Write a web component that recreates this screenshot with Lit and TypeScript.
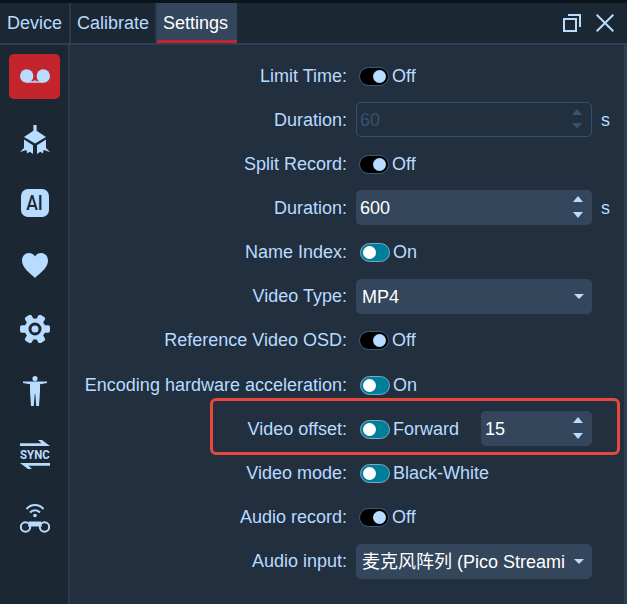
import { LitElement, html, css, svg } from "lit";
import { customElement } from "lit/decorators.js";

const icons = {
  record: svg`<svg width="30" height="15" viewBox="0 0 30 15"><circle cx="6.700" cy="7" r="6.700"/><circle cx="23.300" cy="7" r="6.700"/><path d="M6.700 12.200h16.600v1.500H6.700z"/><path d="M13.500 11.500h3v1h-3z"/></svg>`,
  cube: svg`<svg width="30" height="30" viewBox="0 0 30 30"><path d="M13.400 0h3.200v5.700L26 12 15 18.500 4 12l9.400-6.300z"/><path d="M4 14.500l9 5.700V29l-3.300-2.200L7 28.500l-.5-3.500L0 27l4-4z"/><path d="M26 14.500l-9 5.700V29l3.300-2.200L23 28.500l.5-3.500L30 27l-4-4z"/></svg>`,
  heart: svg`<svg width="26" height="25" viewBox="0 0 26 25"><path d="M13 25C8 20 0 15 0 7.500 0 3 3.200 0 7 0c2.500 0 4.700 1.300 6 3.500C14.300 1.300 16.500 0 19 0c3.800 0 7 3 7 7.500C26 15 18 20 13 25z"/></svg>`,
  gear: svg`<svg width="30" height="28" viewBox="0 0 30 28"><g transform="translate(15 14)"><rect x="-15" y="-3.800" width="30" height="7.600" rx="2"/><rect x="-15" y="-3.800" width="30" height="7.600" rx="2" transform="rotate(60)"/><rect x="-15" y="-3.800" width="30" height="7.600" rx="2" transform="rotate(120)"/><circle r="10.500"/><circle r="5" fill="none" stroke="#1b2733" stroke-width="3"/></g></svg>`,
  person: svg`<svg width="24" height="31" viewBox="0 0 24 31"><circle cx="12" cy="2.600" r="2.600"/><path d="M0 5.500h24v1.500l-7 1.200v7.300L16 30h-2.800L12.300 18h-.6L10.800 30H8L7 15.500V8.200L0 7z"/></svg>`,
  arrowTop: svg`<svg width="30" height="6" viewBox="0 0 30 6"><path d="M0 3.300h21.500L18 0h4l8 6H0z"/></svg>`,
  arrowBottom: svg`<svg width="30" height="6" viewBox="0 0 30 6"><path d="M30 2.700H8.500L12 6H8L0 0h30z"/></svg>`,
  wifi: svg`<svg width="30" height="31" viewBox="0 0 30 31"><path d="M6.500 7C11 1.800 19 1.800 23.500 7" fill="none" stroke="#b8dcff" stroke-width="2"/><path d="M10 10.500c2.800-3 7.200-3 10 0" fill="none" stroke="#b8dcff" stroke-width="2"/><circle cx="15" cy="13.500" r="1.800"/><circle cx="5.500" cy="25" r="4.700" fill="none" stroke="#b8dcff" stroke-width="2"/><circle cx="24.500" cy="25" r="4.700" fill="none" stroke="#b8dcff" stroke-width="2"/><path d="M9 19.500h12l1 5H8z"/></svg>`,
  restore: svg`<svg width="18" height="18" viewBox="0 0 18 18" fill="none" stroke="#b8dcff" stroke-width="2"><rect x="1" y="5" width="12" height="12"/><path d="M5 1h12v12"/></svg>`,
  close: svg`<svg width="18" height="18" viewBox="0 0 18 18" fill="none" stroke="#b8dcff" stroke-width="2"><path d="M.7.700l16.600 16.600M17.300.700L.7 17.300"/></svg>`,
};

type Row = { label: string; kind: "toggle" | "num" | "select" | "offset"; on?: boolean; text?: string; value?: string; disabled?: boolean };

const rows: Row[] = [
  { label: "Limit Time:", kind: "toggle", on: false, text: "Off" },
  { label: "Duration:", kind: "num", value: "60", disabled: true },
  { label: "Split Record:", kind: "toggle", on: false, text: "Off" },
  { label: "Duration:", kind: "num", value: "600" },
  { label: "Name Index:", kind: "toggle", on: true, text: "On" },
  { label: "Video Type:", kind: "select", value: "MP4" },
  { label: "Reference Video OSD:", kind: "toggle", on: false, text: "Off" },
  { label: "Encoding hardware acceleration:", kind: "toggle", on: true, text: "On" },
  { label: "Video offset:", kind: "offset", on: true, text: "Forward", value: "15" },
  { label: "Video mode:", kind: "toggle", on: true, text: "Black-White" },
  { label: "Audio record:", kind: "toggle", on: false, text: "Off" },
  { label: "Audio input:", kind: "select", value: "麦克风阵列 (Pico Streami" },
];

@customElement("app-root")
export class AppRoot extends LitElement {
  static styles = css`
    :host {
      display: block;
      width: 627px;
      height: 604px;
      overflow: hidden;
      background: #212f3f;
      color: #b8dcff;
      font-family: "Liberation Sans", "Noto Sans CJK SC", sans-serif;
      font-size: 18px;
    }
    .strip { height: 3px; background: #0b131b; }
    .head {
      display: flex;
      height: 40px;
      background: #1b2733;
      border-bottom: 2px solid #2f4054;
    }
    .tab {
      display: flex;
      align-items: center;
      padding-top: 1px;
      padding-left: 6px;
      border-right: 2px solid #2a3a4c;
      box-sizing: border-box;
    }
    .t1 { width: 71px; padding-left: 7px; }
    .t2 { width: 86px; }
    .t3 {
      width: 80px;
      background: #34465c;
      color: #fff;
      border-right: 0;
      border-bottom: 3px solid #c4252d;
      padding-top: 4px;
    }
    .winbtns { margin-left: auto; display: flex; align-items: center; gap: 15px; padding-right: 13px; }
    .main { display: flex; height: 559px; }
    .side {
      width: 70px;
      flex: none;
      background: #1b2733;
      border-right: 2px solid #2a3a4c;
      box-sizing: border-box;
      display: flex;
      flex-direction: column;
    }
    .ic {
      height: 63px;
      flex: none;
      width: 69px;
      display: flex;
      align-items: center;
      justify-content: center;
      fill: #b8dcff;
    }
    .rec {
      width: 51px;
      height: 45px;
      background: #c4252d;
      border-radius: 5px;
      display: flex;
      align-items: center;
      justify-content: center;
    }
    .ai {
      width: 28px;
      height: 28px;
      background: #b8dcff;
      border-radius: 7px;
      color: #1b2733;
      font-family: "Roboto", sans-serif;
      font-weight: 500;
      font-size: 20px;
      display: flex;
      align-items: center;
      justify-content: center;
      line-height: 1;
    }
    .ai span { display: block; transform: scaleX(0.88); }
    .sync { display: flex; flex-direction: column; align-items: center; width: 30px; gap: 3px; }
    .sync svg { display: block; }
    .sync span {
      font-family: "Roboto", sans-serif;
      font-weight: 700;
      font-size: 13px;
      line-height: 11px;
      display: block;
      transform: scaleX(0.88);
      white-space: nowrap;
    }
    .form {
      flex: 1;
      padding-top: 9px;
      min-width: 0;
      border-right: 3px solid #2d3e52;
    }
    .row { display: flex; align-items: center; height: 44.15px; position: relative; }
    .label { width: 277px; text-align: right; flex: none; margin-right: 9px; white-space: nowrap; }
    .control { display: flex; align-items: center; min-width: 0; }
    .toggle {
      width: 30px;
      height: 19px;
      border-radius: 10px;
      box-sizing: border-box;
      border: 1.500px solid #3d5a78;
      background: #000;
      display: flex;
      align-items: center;
      justify-content: flex-end;
      padding: 0 2px;
      margin-left: 3px;
      margin-right: 3px;
      flex: none;
    }
    .toggle.on { background: #007f9b; border-color: #7ea6c6; justify-content: flex-start; margin-left: 4px; }
    .knob { width: 13px; height: 13px; border-radius: 50%; background: #b8dcff; }
    .on .knob { background: #fff; }
    .box {
      position: relative;
      width: 236px;
      height: 35px;
      box-sizing: border-box;
      background: #34465c;
      border-radius: 5px;
      color: #fff;
      display: flex;
      align-items: center;
      padding-left: 4px;
      padding-top: 2px;
      flex: none;
      margin-top: -1px;
    }
    .box.dis {
      background: transparent;
      border: 1.500px solid #34506e;
      color: #35526f;
      padding-left: 3px;
    }
    .box.small { width: 111px; margin-left: 22px; }
    .box.sel { padding-left: 6px; }
    .val { white-space: nowrap; line-height: 20px; }
    .spin {
      position: absolute;
      right: 8px;
      top: 6px;
      bottom: 7px;
      width: 11px;
      display: flex;
      flex-direction: column;
      justify-content: space-between;
    }
    .up, .down, .caret { width: 0; height: 0; border-left: 5.500px solid transparent; border-right: 5.500px solid transparent; }
    .up { border-bottom: 6.500px solid #b8dcff; }
    .down { border-top: 6.500px solid #b8dcff; }
    .dis .up { border-bottom-color: #35526f; }
    .dis .down { border-top-color: #35526f; }
    .caret { position: absolute; right: 8px; top: 15px; border-left-width: 5px; border-right-width: 5px; border-top: 5px solid #b8dcff; }
    .unit { margin-left: 9px; }
    .mark {
      position: absolute;
      left: 140px;
      right: 4px;
      top: -9px;
      bottom: -4px;
      border: 3px solid #e8473d;
      border-radius: 6px;
      pointer-events: none;
    }
  `;

  private renderControl(r: Row) {
    const toggle = html`<div class="toggle ${r.on ? "on" : ""}"><div class="knob"></div></div>`;
    if (r.kind === "toggle") return html`${toggle}<span>${r.text}</span>`;
    if (r.kind === "offset")
      return html`${toggle}<span>${r.text}</span>
        <div class="box small"><span>${r.value}</span><div class="spin"><div class="up"></div><div class="down"></div></div></div>`;
    if (r.kind === "select")
      return html`<div class="box sel"><div class="val">${r.value}</div><div class="caret"></div></div>`;
    return html`<div class="box ${r.disabled ? "dis" : ""}"><span>${r.value}</span><div class="spin"><div class="up"></div><div class="down"></div></div></div><span class="unit">s</span>`;
  }

  render() {
    return html`
      <div class="strip"></div>
      <div class="head">
        <div class="tab t1">Device</div>
        <div class="tab t2">Calibrate</div>
        <div class="tab t3">Settings</div>
        <div class="winbtns">${icons.restore}${icons.close}</div>
      </div>
      <div class="main">
        <div class="side">
          <div class="ic"><div class="rec">${icons.record}</div></div>
          <div class="ic">${icons.cube}</div>
          <div class="ic"><div class="ai"><span>AI</span></div></div>
          <div class="ic">${icons.heart}</div>
          <div class="ic">${icons.gear}</div>
          <div class="ic">${icons.person}</div>
          <div class="ic">
            <div class="sync">${icons.arrowTop}<span>SYNC</span>${icons.arrowBottom}</div>
          </div>
          <div class="ic">${icons.wifi}</div>
        </div>
        <div class="form">
          ${rows.map(
            (r) => html`<div class="row">
              <div class="label">${r.label}</div>
              <div class="control">${this.renderControl(r)}</div>
              ${r.kind === "offset" ? html`<div class="mark"></div>` : ""}
            </div>`
          )}
        </div>
      </div>
    `;
  }
}
